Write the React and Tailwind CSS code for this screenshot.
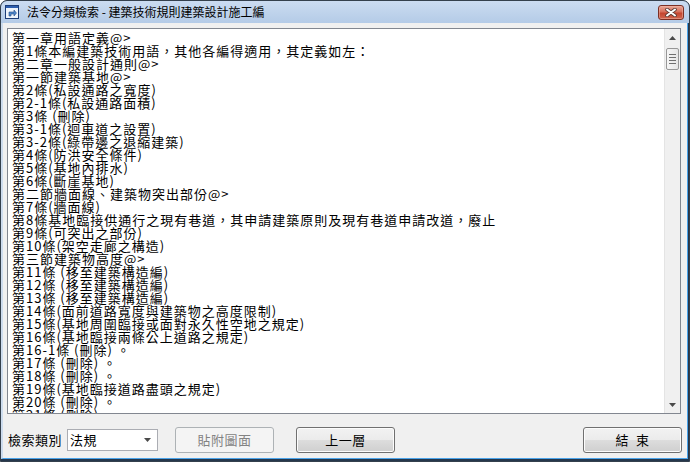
const lines = [
  "第一章用語定義@>",
  "第1條本編建築技術用語，其他各編得適用，其定義如左：",
  "第二章一般設計通則@>",
  "第一節建築基地@>",
  "第2條(私設通路之寬度)",
  "第2-1條(私設通路面積)",
  "第3條 (刪除)",
  "第3-1條(迴車道之設置)",
  "第3-2條(綠帶邊之退縮建築)",
  "第4條(防洪安全條件)",
  "第5條(基地內排水)",
  "第6條(斷崖基地)",
  "第二節牆面線、建築物突出部份@>",
  "第7條(牆面線)",
  "第8條基地臨接供通行之現有巷道，其申請建築原則及現有巷道申請改道，廢止",
  "第9條(可突出之部份)",
  "第10條(架空走廊之構造)",
  "第三節建築物高度@>",
  "第11條 (移至建築構造編)",
  "第12條 (移至建築構造編)",
  "第13條 (移至建築構造編)",
  "第14條(面前道路寬度與建築物之高度限制)",
  "第15條(基地周圍臨接或面對永久性空地之規定)",
  "第16條(基地臨接兩條公上道路之規定)",
  "第16-1條 (刪除) 。",
  "第17條 (刪除) 。",
  "第18條 (刪除) 。",
  "第19條(基地臨接道路盡頭之規定)",
  "第20條 (刪除) 。",
  "第21條 (刪除) 。",
];

function AppIcon() {
  return (
    <svg width="14" height="14" viewBox="0 0 14 14">
      <rect x="0.5" y="0.5" width="13" height="13" fill="#eef4fb" stroke="#1c3d78" />
      <rect x="1" y="1" width="12" height="2" fill="#2f5fae" />
      <path d="M4 11 L4 7 L9 7 L9 5 L11.5 8 L9 11 L9 9 L6 9 L6 11 Z" fill="#4c86c9" stroke="#234a86" strokeWidth="0.6" />
    </svg>
  );
}

function CloseButton() {
  return (
    <div className="flex h-[15px] w-[26px] items-center justify-center rounded-[3px] border border-[#7c2f24] bg-[linear-gradient(#eaa897,#d66e5a_45%,#c4452f_55%,#d0664f)] shadow-[inset_0_0_0_1px_#f0b8aa80]">
      <svg width="12" height="9" viewBox="0 0 12 9">
        <path d="M2 1.5 L10 7.5 M10 1.5 L2 7.5" stroke="#5b3a34" strokeWidth="3.6" strokeLinecap="round" />
        <path d="M2 1.5 L10 7.5 M10 1.5 L2 7.5" stroke="#ffffff" strokeWidth="2" strokeLinecap="round" />
      </svg>
    </div>
  );
}

function Arrow({ down }) {
  return (
    <svg width="7" height="4" viewBox="0 0 7 4">
      <path d={down ? "M0 0 L7 0 L3.5 4 Z" : "M0 4 L7 4 L3.5 0 Z"} fill="#4a4a4a" />
    </svg>
  );
}

function Scrollbar() {
  return (
    <div className="flex w-[16px] shrink-0 flex-col border-l border-[#e4e4e4] bg-[#f0f0f0]">
      <div className="flex h-[17px] items-center justify-center">
        <Arrow />
      </div>
      <div className="mx-[1px] mt-[2px] flex h-[22px] flex-col items-center justify-center gap-[2px] rounded-[2px] border border-[#979797] bg-[linear-gradient(90deg,#f6f6f6,#e6e6e6)]">
        <div className="h-[1px] w-[7px] bg-[#6f6f6f]" />
        <div className="h-[1px] w-[7px] bg-[#6f6f6f]" />
        <div className="h-[1px] w-[7px] bg-[#6f6f6f]" />
        <div className="h-[1px] w-[7px] bg-[#6f6f6f]" />
      </div>
      <div className="flex-1" />
      <div className="flex h-[17px] items-center justify-center">
        <Arrow down />
      </div>
    </div>
  );
}

function Button({ children, disabled }) {
  return (
    <div
      className={
        disabled
          ? "flex h-[26px] w-[99px] shrink-0 items-center justify-center rounded-[3px] border border-[#adb2b5] bg-[#f4f4f4] text-[13px] text-[#838383]"
          : "flex h-[26px] w-[99px] shrink-0 items-center justify-center rounded-[3px] border border-[#707070] bg-[linear-gradient(#f2f2f2,#ebebeb_50%,#dddddd_50%,#cfcfcf)] text-[13px] text-black shadow-[inset_0_0_0_1px_#fcfcfc]"
      }
    >
      <span className="whitespace-pre tracking-[0.5px]">{children}</span>
    </div>
  );
}

export default function App() {
  return (
    <div className="flex h-[462px] w-[690px] flex-col overflow-hidden rounded-t-[7px] border border-[#34404d] bg-[#25374c] font-['Noto_Sans_CJK_TC',sans-serif]">
      <div className="flex h-[22px] shrink-0 items-center bg-linear-to-b from-[#cbdcf1] to-[#b4cbe7] pl-[4px] pr-[5px]">
        <AppIcon />
        <span className="ml-[8px] text-[12px] leading-none text-black">法令分類檢索 - 建築技術規則建築設計施工編</span>
        <div className="ml-auto">
          <CloseButton />
        </div>
      </div>
      <div className="flex flex-1 flex-col pr-[1px] pb-[2px]">
        <div className="flex flex-1 flex-col border-b border-l-2 border-r border-b-[#4aa3ea] border-l-[#cddcee] border-r-[#4aa3ea] bg-[#f0f0f0] pl-[4px] pr-[6px] pt-[5px]">
          <div className="flex h-[386px] shrink-0 border border-[#828790] bg-white">
            <div className="flex-1 overflow-hidden pl-[4px] pt-[2px] text-[13px] leading-[13px] tracking-[1px] text-black">
              {lines.map((l, i) => (
                <div key={i} className="whitespace-pre">
                  {l}
                </div>
              ))}
            </div>
            <Scrollbar />
          </div>
          <div className="mt-[13px] flex h-[26px] items-center pl-[1px]">
            <span className="text-[13px] tracking-[0.5px] text-black">檢索類別</span>
            <div className="ml-[5px] flex h-[22px] w-[91px] items-center border border-[#abadb3] bg-white pl-[2px] pr-[6px] text-[13px] text-black">
              <span className="tracking-[0.5px]">法規</span>
              <div className="ml-auto">
                <Arrow down />
              </div>
            </div>
            <div className="ml-[17px]">
              <Button disabled>貼附圖面</Button>
            </div>
            <div className="ml-[22px]">
              <Button>上一層</Button>
            </div>
            <div className="ml-auto mr-[-1px]">
              <Button>結  束</Button>
            </div>
          </div>
        </div>
      </div>
    </div>
  );
}
